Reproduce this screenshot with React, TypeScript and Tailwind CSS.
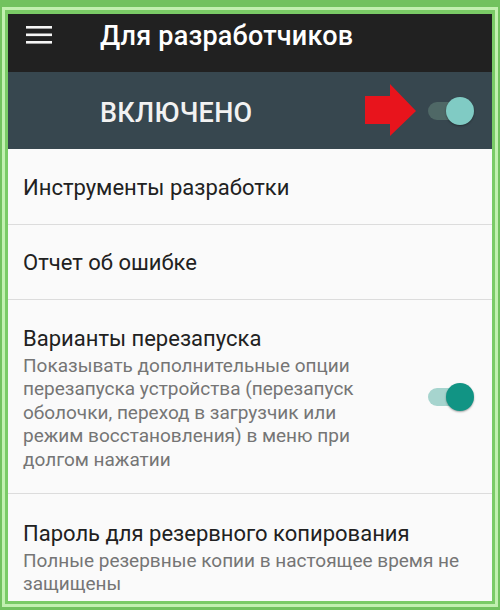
import React from "react";

function Toggle({ track, thumb }: { track: string; thumb: string }) {
  return (
    <div className="relative h-[28px] w-[44px] shrink-0">
      <div className={`absolute left-0 top-[5px] h-[18px] w-[36px] rounded-full ${track}`} />
      <div className={`absolute right-[-2px] top-0 h-[28px] w-[28px] rounded-full shadow-[0_1px_2px_rgba(0,0,0,0.35)] ${thumb}`} />
    </div>
  );
}

export default function App() {
  return (
    <div className="h-[616px] w-[500px] overflow-hidden bg-white font-['Roboto',sans-serif]">
      <div className="h-[610px] bg-[#72c25f] pl-[2px] pr-[2px] pt-[7px] pb-[3px]">
        <div className="h-full border-[3px] border-[#c2f0b0]">
          <div className="flex h-full flex-col bg-[#7acb66] pl-[3px] pr-[3px] pt-[4px] pb-[3px]">
            <div className="flex flex-1 flex-col overflow-hidden bg-[#fafafa]">
              {/* toolbar */}
              <div className="flex h-[58px] shrink-0 items-center bg-[#212121] pb-[14px]">
                <svg width="26" height="20" viewBox="0 0 26 20" className="ml-[18px] -mt-[3px]">
                  <rect x="0" y="1" width="26" height="2.6" fill="#f5f5f5" />
                  <rect x="0" y="8.5" width="26" height="2.6" fill="#f5f5f5" />
                  <rect x="0" y="16" width="26" height="2.6" fill="#f5f5f5" />
                </svg>
                <div className="ml-[48px] text-[27px] font-medium leading-none tracking-[0.2px] text-white">
                  Для разработчиков
                </div>
              </div>

              {/* master switch */}
              <div className="flex h-[77px] shrink-0 items-center bg-[#37474f] pr-[20px]">
                <div className="ml-[92px] flex-1 pt-[5px] text-[27px] font-medium leading-none tracking-[0.3px] text-[#f2f2f2]">
                  ВКЛЮЧЕНО
                </div>
                <svg width="54" height="54" viewBox="0 0 54 54" className="mr-[11px]">
                  <polygon points="2,12 27,12 27,0 53,27 27,52 27,40 2,40" fill="#e8141c" />
                </svg>
                <Toggle track="bg-[#4f6866]" thumb="bg-[#80cbc4]" />
              </div>

              {/* list */}
              <div className="flex h-[76px] shrink-0 items-center border-b border-[#dcdcdc] px-[15px] pt-[3px]">
                <span className="text-[22px] leading-none text-[#212121]">Инструменты разработки</span>
              </div>
              <div className="flex h-[75px] shrink-0 items-center border-b border-[#dcdcdc] px-[15px] pt-[2px]">
                <span className="text-[22px] leading-none text-[#212121]">Отчет об ошибке</span>
              </div>
              <div className="flex h-[194px] shrink-0 items-center border-b border-[#dcdcdc] pl-[15px] pr-[20px]">
                <div className="flex-1 pt-[4px]">
                  <div className="text-[22px] leading-[26px] text-[#212121]">Варианты перезапуска</div>
                  <div className="mt-[2px] text-[19px] leading-[23.5px] text-[#757575]">
                    Показывать дополнительные опции
                    <br />
                    перезапуска устройства (перезапуск
                    <br />
                    оболочки, переход в загрузчик или
                    <br />
                    режим восстановления) в меню при
                    <br />
                    долгом нажатии
                  </div>
                </div>
                <Toggle track="bg-[#a6d4ce]" thumb="bg-[#119484]" />
              </div>
              <div className="px-[15px] pt-[27px]">
                <div className="text-[22px] leading-[26px] text-[#212121]">Пароль для резервного копирования</div>
                <div className="mt-[2px] text-[19px] leading-[23px] text-[#757575]">
                  Полные резервные копии в настоящее время не
                  <br />
                  защищены
                </div>
              </div>
            </div>
          </div>
        </div>
      </div>
    </div>
  );
}
